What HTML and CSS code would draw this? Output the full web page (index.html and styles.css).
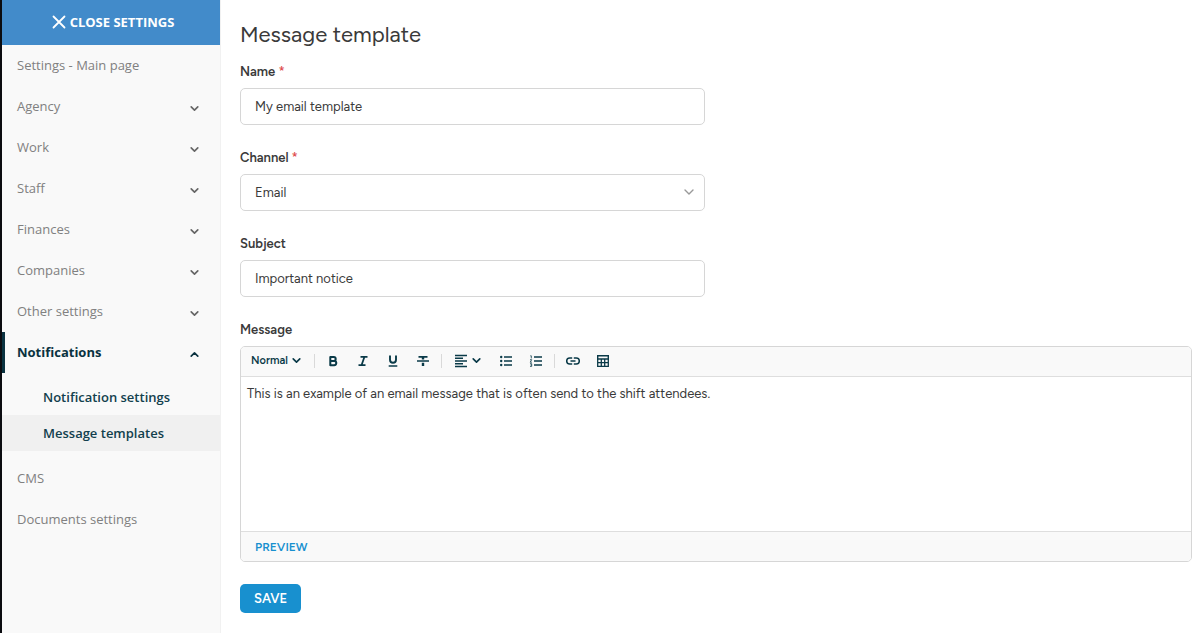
FILE: index.html
```html
<!DOCTYPE html>
<html lang="en">
<head>
  <meta charset="UTF-8" />
  <meta name="viewport" content="width=device-width, initial-scale=1.0"/>
  <title>Message template</title>
  <link rel="stylesheet" href="styles.css">
</head>
<body>

  <!-- shared icons -->
  <svg class="sprite" aria-hidden="true">
    <symbol id="chevron" viewBox="0 0 10 10">
      <path d="M2 3.5 5 6.5 8 3.5" fill="none" stroke="currentColor" stroke-width="1.5" stroke-linecap="round" stroke-linejoin="round"/>
    </symbol>
  </svg>

  <aside class="sidebar">
    <button type="button" class="close-btn">
      <svg width="14" height="14" viewBox="0 0 14 14"><path d="M1.5 1.5 12.5 12.5M12.5 1.5 1.5 12.5" stroke="currentColor" stroke-width="1.8" stroke-linecap="round"/></svg>
      CLOSE SETTINGS
    </button>
    <nav>
      <a href="#" class="nav-item">Settings - Main page</a>
      <a href="#" class="nav-item">Agency <svg class="chevron"><use href="#chevron"/></svg></a>
      <a href="#" class="nav-item">Work <svg class="chevron"><use href="#chevron"/></svg></a>
      <a href="#" class="nav-item">Staff <svg class="chevron"><use href="#chevron"/></svg></a>
      <a href="#" class="nav-item">Finances <svg class="chevron"><use href="#chevron"/></svg></a>
      <a href="#" class="nav-item">Companies <svg class="chevron"><use href="#chevron"/></svg></a>
      <a href="#" class="nav-item">Other settings <svg class="chevron"><use href="#chevron"/></svg></a>
      <a href="#" class="nav-item active">Notifications <svg class="chevron up"><use href="#chevron"/></svg></a>
      <div class="subnav">
        <a href="#">Notification settings</a>
        <a href="#" class="current">Message templates</a>
      </div>
      <a href="#" class="nav-item">CMS</a>
      <a href="#" class="nav-item">Documents settings</a>
    </nav>
  </aside>

  <main>
    <h1>Message template</h1>
    <form>
      <div class="field">
        <label for="name">Name <span class="required">*</span></label>
        <input type="text" id="name" value="My email template">
      </div>
      <div class="field">
        <label for="channel">Channel <span class="required">*</span></label>
        <div class="select-wrap">
          <select id="channel">
            <option>Email</option>
          </select>
          <svg class="select-arrow" viewBox="0 0 12 12"><path d="M2 4 6 8 10 4" fill="none" stroke="currentColor" stroke-width="1.4" stroke-linecap="round" stroke-linejoin="round"/></svg>
        </div>
      </div>
      <div class="field">
        <label for="subject">Subject</label>
        <input type="text" id="subject" value="Important notice">
      </div>

      <label for="message">Message</label>
      <div class="editor">
        <div class="toolbar">
          <button type="button" class="format">Normal <svg class="chevron"><use href="#chevron"/></svg></button>
          <span class="divider"></span>
          <button type="button" class="tool" aria-label="Bold">
            <svg viewBox="0 0 14 14"><path d="M4.3 3h3.4a2 2 0 0 1 0 4H4.3zM4.3 7h3.9a2.1 2.1 0 0 1 0 4.2H4.3z" fill="none" stroke="currentColor" stroke-width="2" stroke-linejoin="round"/></svg>
          </button>
          <button type="button" class="tool" aria-label="Italic">
            <svg viewBox="0 0 14 14"><path d="M4.5 2.8h7M2.5 11.2h7M8.4 3 5.6 11" fill="none" stroke="currentColor" stroke-width="1.8"/></svg>
          </button>
          <button type="button" class="tool" aria-label="Underline">
            <svg viewBox="0 0 14 14"><path d="M4 1.5v4.2a3 3 0 0 0 6 0V1.5" fill="none" stroke="currentColor" stroke-width="1.9"/><path d="M2.7 12h8.6" stroke="currentColor" stroke-width="1.5"/></svg>
          </button>
          <button type="button" class="tool" aria-label="Strikethrough">
            <svg viewBox="0 0 14 14"><path d="M2.5 2.8h9M1 7h12" stroke="currentColor" stroke-width="1.7"/><path d="M7 3v2.5M7 8.8V12" stroke="currentColor" stroke-width="2.4"/></svg>
          </button>
          <span class="divider"></span>
          <button type="button" class="tool align" aria-label="Align">
            <svg viewBox="0 0 14 14"><path d="M1 1.5h12M1 4.3h8M1 7h12M1 9.8h8M1 12.5h12" stroke="currentColor" stroke-width="1.4"/></svg>
            <svg class="chevron"><use href="#chevron"/></svg>
          </button>
          <button type="button" class="tool" aria-label="Bulleted list">
            <svg viewBox="0 0 14 14"><path d="M5 3h8M5 7h8M5 11h8" stroke="currentColor" stroke-width="1.6"/><g fill="currentColor"><circle cx="2.2" cy="3" r="1.2"/><circle cx="2.2" cy="7" r="1.2"/><circle cx="2.2" cy="11" r="1.2"/></g></svg>
          </button>
          <button type="button" class="tool" aria-label="Numbered list">
            <svg viewBox="0 0 14 14"><path d="M5 3h8M5 7h8M5 11h8" stroke="currentColor" stroke-width="1.6"/><path d="M1.3 1.8h1v2.6M1 5.7h1.7L1.2 8.2h1.7M1 9.7h1.7v2.7H1M1.5 11h1.2" fill="none" stroke="currentColor" stroke-width=".8"/></svg>
          </button>
          <span class="divider"></span>
          <button type="button" class="tool" aria-label="Link">
            <svg viewBox="0 0 14 14"><path d="M6.2 4H3.7a3 3 0 0 0 0 6h2.5M7.8 4h2.5a3 3 0 0 1 0 6H7.8M4.5 7h5" fill="none" stroke="currentColor" stroke-width="1.5"/></svg>
          </button>
          <button type="button" class="tool" aria-label="Table">
            <svg viewBox="0 0 14 14"><path d="M1.7 1.7h10.6V5H1.7z" fill="none" stroke="currentColor" stroke-width="1.4"/><path d="M1.7 5v7.3h10.6V5M2 8.7h10M5.3 5v7M8.7 5v7" fill="none" stroke="currentColor" stroke-width="1.3"/></svg>
          </button>
        </div>
        <textarea id="message">This is an example of an email message that is often send to the shift attendees.</textarea>
        <div class="editor-footer">
          <a href="#">PREVIEW</a>
        </div>
      </div>

      <button type="submit" class="save-btn">SAVE</button>
    </form>
  </main>

</body>
</html>
```
FILE: styles.css
```css
* {
  margin: 0;
  padding: 0;
  box-sizing: border-box;
}

body {
  display: flex;
  min-height: 100vh;
  border-left: 2px solid #0b0c10;
  background: #fff;
  color: #3a3a3a;
  font-family: Figtree, Inter, sans-serif;
  font-size: 13px;
}

button, input, select, textarea {
  font: inherit;
  color: inherit;
}

button {
  border: none;
  background: none;
  cursor: pointer;
}

a {
  text-decoration: none;
}

.sprite {
  position: absolute;
  width: 0;
  height: 0;
}

.chevron {
  width: 11px;
  height: 11px;
  flex-shrink: 0;
}

.chevron.up {
  transform: rotate(180deg);
}

/* sidebar */
.sidebar {
  width: 219px;
  flex-shrink: 0;
  background: #f9f9f9;
  border-right: 1px solid #f1f1f1;
  font-family: "Open Sans", sans-serif;
}

.close-btn {
  display: flex;
  align-items: center;
  justify-content: center;
  gap: 4px;
  width: 100%;
  height: 45px;
  padding: 0 0 2px 4px;
  background: #428bca;
  color: #fff;
  font-weight: 700;
}

.nav-item {
  display: flex;
  align-items: center;
  justify-content: space-between;
  height: 41px;
  padding: 0 20px 2px 12px;
  border-left: 3px solid transparent;
  color: #808080;
}

.nav-item .chevron {
  margin-top: 6px;
  color: #666;
}

.nav-item.active {
  border-left-color: #0a3240;
  color: #0a3240;
  font-weight: 700;
}

.nav-item.active .chevron {
  color: #0a3240;
}

.subnav {
  padding: 6px 0 7px;
}

.subnav a {
  display: flex;
  align-items: center;
  height: 36px;
  padding-left: 41px;
  color: #12404d;
  font-weight: 600;
}

.subnav .current {
  background: #f0f0f0;
}

/* form */
main {
  flex: 1;
  min-width: 0;
  padding: 20px 8px 20px 19px;
}

h1 {
  margin-bottom: 12px;
  font-size: 22px;
  font-weight: 400;
  line-height: 30px;
}

label {
  display: block;
  margin-bottom: 6px;
  font-weight: 600;
  line-height: 20px;
}

.required {
  color: #e05252;
}

.field {
  max-width: 465px;
  margin-bottom: 23px;
}

.field input,
.field select {
  display: block;
  width: 100%;
  height: 37px;
  padding: 0 14px;
  border: 1px solid #d6d6d6;
  border-radius: 5px;
  background: #fff;
}

.field select {
  appearance: none;
}

.select-wrap {
  position: relative;
}

.select-arrow {
  position: absolute;
  top: 12px;
  right: 10px;
  width: 12px;
  height: 12px;
  color: #999;
  pointer-events: none;
}

/* message editor */
.editor {
  border: 1px solid #d6d6d6;
  border-radius: 5px;
  overflow: hidden;
}

.toolbar {
  display: flex;
  align-items: center;
  height: 30px;
  padding: 0 10px 2px;
  background: #f9f9f9;
  border-bottom: 1px solid #dedede;
  color: #0a3a48;
}

.format {
  display: flex;
  align-items: center;
  gap: 3px;
  font-size: 11px;
  font-weight: 600;
}

.divider {
  width: 1px;
  height: 14px;
  margin: 0 3px;
  background: #d9d9d9;
}

.format + .divider {
  margin-left: 12px;
}

.tool {
  display: flex;
  align-items: center;
  justify-content: center;
  width: 30px;
  height: 24px;
}

.tool svg {
  width: 14px;
  height: 14px;
}

.tool.align {
  gap: 3px;
  width: 46px;
}

.tool .chevron {
  width: 11px;
  height: 11px;
}

textarea {
  display: block;
  width: 100%;
  height: 154px;
  padding: 7px 6px;
  border: none;
  outline: none;
  resize: none;
  line-height: 20px;
}

.editor-footer {
  display: flex;
  align-items: center;
  height: 30px;
  padding: 0 14px;
  background: #f9f9f9;
  border-top: 1px solid #dedede;
}

.editor-footer a {
  color: #1890cf;
  font-size: 12px;
  font-weight: 600;
}

.save-btn {
  height: 29px;
  margin-top: 22px;
  padding: 0 14px;
  border-radius: 5px;
  background: #1890cf;
  color: #fff;
  font-weight: 600;
}
```
